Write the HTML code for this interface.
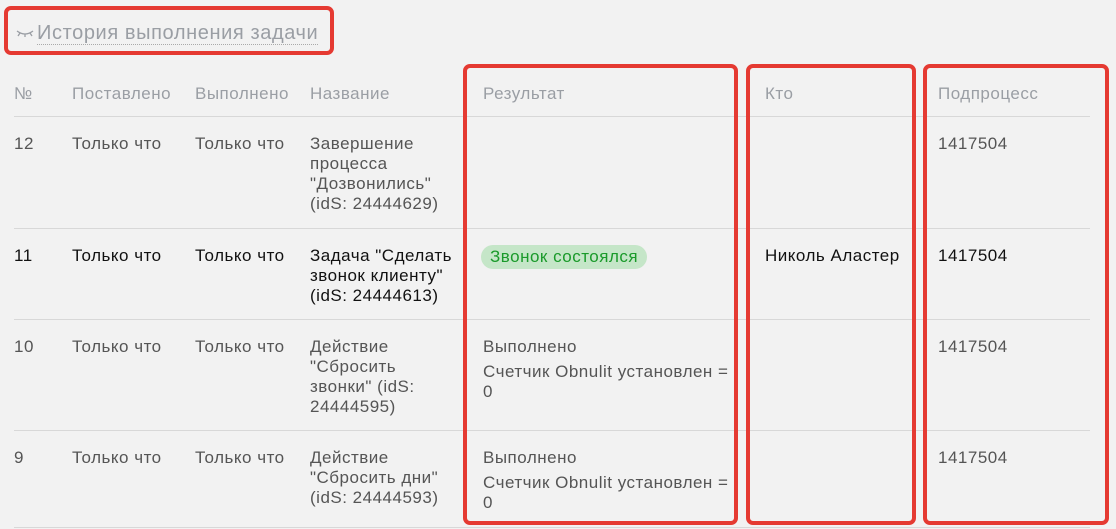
<!DOCTYPE html>
<html><head><meta charset="utf-8"><style>
body{margin:0;width:1116px;height:529px;background:#f2f2f2;font-family:"Liberation Sans",sans-serif;font-size:17px;color:#555;position:relative;overflow:hidden;letter-spacing:0.5px}
.a{position:absolute;line-height:20px;white-space:nowrap}
.h{color:#9a9ea4;top:82px}
.k{color:#111}
.ln{position:absolute;left:14px;width:1076px;height:1px;background:#d8d8d8}
.box{position:absolute;border:4px solid #e53a32;border-radius:7px;box-sizing:border-box}
.badge{position:absolute;left:481px;top:245px;height:24px;padding:0 9px;border-radius:12px;background:#c5e6c8;color:#1a9a2a;line-height:24px}
</style></head><body>
<svg style="position:absolute;left:16px;top:28px" width="18" height="10" viewBox="0 0 18 10"><path d="M1 3 Q9 9 17 3 M4 5 L2 8 M9 6 L9 9 M14 5 L16 8" stroke="#9a9ea4" stroke-width="1.3" fill="none"/></svg>
<div class="a" style="left:37px;top:23px;font-size:20px;letter-spacing:0.6px;color:#9a9ea4"><span style="border-bottom:1px dotted #aaa">История выполнения задачи</span></div>
<div class="a h" style="left:14px;top:84px">№</div>
<div class="a h" style="left:72px;top:84px">Поставлено</div>
<div class="a h" style="left:195px;top:84px">Выполнено</div>
<div class="a h" style="left:310px;top:84px">Название</div>
<div class="a h" style="left:483px;top:84px">Результат</div>
<div class="a h" style="left:765px;top:84px">Кто</div>
<div class="a h" style="left:938px;top:84px">Подпроцесс</div>
<div class="ln" style="top:116px"></div>
<div class="ln" style="top:228px"></div>
<div class="ln" style="top:319px"></div>
<div class="ln" style="top:430px"></div>
<div class="ln" style="top:527px"></div>

<div class="a" style="left:14px;top:134px">12</div>
<div class="a" style="left:72px;top:134px">Только что</div>
<div class="a" style="left:195px;top:134px">Только что</div>
<div class="a" style="left:310px;top:134px">Завершение<br>процесса<br>"Дозвонились"<br>(idS: 24444629)</div>
<div class="a" style="left:938px;top:134px">1417504</div>

<div class="a k" style="left:14px;top:246px">11</div>
<div class="a k" style="left:72px;top:246px">Только что</div>
<div class="a k" style="left:195px;top:246px">Только что</div>
<div class="a k" style="left:310px;top:246px">Задача "Сделать<br>звонок клиенту"<br>(idS: 24444613)</div>
<div class="badge">Звонок состоялся</div>
<div class="a k" style="left:765px;top:246px">Николь Аластер</div>
<div class="a k" style="left:938px;top:246px">1417504</div>

<div class="a" style="left:14px;top:337px">10</div>
<div class="a" style="left:72px;top:337px">Только что</div>
<div class="a" style="left:195px;top:337px">Только что</div>
<div class="a" style="left:310px;top:337px">Действие<br>"Сбросить<br>звонки" (idS:<br>24444595)</div>
<div class="a" style="left:483px;top:337px">Выполнено</div>
<div class="a" style="left:483px;top:362px">Счетчик Obnulit установлен =<br>0</div>
<div class="a" style="left:938px;top:337px">1417504</div>

<div class="a" style="left:14px;top:448px">9</div>
<div class="a" style="left:72px;top:448px">Только что</div>
<div class="a" style="left:195px;top:448px">Только что</div>
<div class="a" style="left:310px;top:448px">Действие<br>"Сбросить дни"<br>(idS: 24444593)</div>
<div class="a" style="left:483px;top:448px">Выполнено</div>
<div class="a" style="left:483px;top:473px">Счетчик Obnulit установлен =<br>0</div>
<div class="a" style="left:938px;top:448px">1417504</div>

<div class="box" style="left:4px;top:6px;width:330px;height:49px"></div>
<div class="box" style="left:463px;top:64px;width:275px;height:461px"></div>
<div class="box" style="left:746px;top:64px;width:170px;height:461px"></div>
<div class="box" style="left:923px;top:64px;width:186px;height:461px"></div>
</body></html>
